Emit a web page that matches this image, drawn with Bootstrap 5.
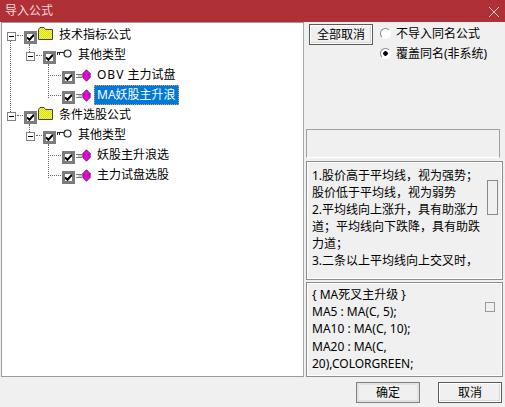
<!DOCTYPE html>
<html lang="zh-CN">
<head>
<meta charset="utf-8">
<title>导入公式</title>
<link rel="stylesheet" href="https://cdn.jsdelivr.net/npm/bootstrap@5.3.0/dist/css/bootstrap.min.css">
<style>
html,body{height:407px;overflow:hidden}
body{background:#f0f0f0;color:#000;font:12px/17px "Noto Sans","Noto Sans CJK SC",sans-serif}
.dlg{width:505px;height:407px}
.ttl{height:22px;background:#b03037;color:#f2dcdc;padding-left:5px;padding-bottom:1px;font-size:12px}
.ttl svg{margin-right:6px;margin-top:3px}
.main{height:355px;padding-left:1px}
.treebox{width:303px;border:1px solid #9a9a9a;border-right-color:#a8a8a8;background:#fff;margin:0;padding:2px 0 0}
.side{width:197px;margin-left:2px}
.tnode{height:20px;position:relative;list-style:none}
.lv1{padding-left:19px}
.lv2{padding-left:38px}
.exp{width:9px;height:9px;border:1px solid #808080;background:#fff;margin-left:5px;margin-right:8px;margin-top:2px;position:relative;flex:none}
.exp::after{content:"";position:absolute;left:1px;right:1px;top:3px;height:1px;background:#000}
.lv2 .chk{margin-left:22px}
input.chk{appearance:none;width:13px;height:13px;margin:5px 0 0;border:3px solid #7c7c7c;border-radius:0;background:#fff center/7px 7px no-repeat;flex:none}
input.chk:checked{background-image:url("data:image/svg+xml,%3Csvg xmlns='http://www.w3.org/2000/svg' viewBox='0 0 7 7'%3E%3Cpath d='M0 3.4 2.4 5.8 7 .8' fill='none' stroke='%23000' stroke-width='2'/%3E%3C/svg%3E")}
.ico{flex:none;margin-left:1px}
.lbl{margin-left:6px;white-space:nowrap;line-height:20px}
.lbl.sel{margin-left:3px;margin-top:-1px;height:20px;padding:0 2px;background:#0078d7;color:#fff;border:1px dotted #e8a040;line-height:18px}
.wide{letter-spacing:1px}
.vl,.hl{position:absolute;pointer-events:none}
.vl{border-left:1px dotted #666;width:0}
.hl{border-top:1px dotted #666;height:0}
.wbtn{background:#f0f0f0;border:1px solid #5a5a5a;box-shadow:inset 0 0 0 1px #fff,inset -1px -1px 0 1px #d8d8d8;border-radius:0;padding:0;font-size:12px;line-height:18px;color:#000;width:64px;height:21px}
.wbtn.pale{border-color:#808080;box-shadow:inset 0 0 0 2px #e2e2e2}
.topzone{height:107px;padding:2px 0 0 3px}
.rad{padding:0;margin:0 0 3px;display:flex;align-items:center;height:17px;min-height:0}
.rad .form-check-input{appearance:none;float:none;width:11px;height:11px;margin:0 5px 0 0;border:1px solid #8a8a8a;border-right-color:#fff;border-bottom-color:#fff;border-radius:50%;background:#fff none;box-shadow:none}
.rad .form-check-input:checked{background:radial-gradient(circle,#000 0 2px,#fff 2.5px)}
.rad .form-check-label{opacity:1;color:#000}
.rads{margin-left:7px;padding-top:1px}
.gbox{width:194px;height:29px;border:1px solid #a0a0a0;border-bottom-color:#fff;margin:0}
.memo{border:1px solid #8c8c8c;box-shadow:inset 0 0 0 1px #fff;padding:5px 18px 0 5px;position:relative;overflow:hidden;width:197px;line-height:17px}
.memoA{height:119px;margin-top:3px}
.memoB{height:95px;margin-top:2px;padding-top:3px;line-height:17.2px}
.thumb{position:absolute;left:180px;top:18px;width:11px;height:35px;border:1px solid #8a8a8a;background:#f0f0f0}
.sq{position:absolute;left:178px;top:19px;width:10px;height:10px;border:1px solid #9a9a9a}
.foot{height:30px;padding:5px 3px 0 0;gap:18px}
</style>
</head>
<body>
<div class="dlg d-flex flex-column">
  <div class="ttl d-flex align-items-center justify-content-between">
    <span>导入公式</span>
    <svg width="10" height="10" viewBox="0 0 10 10"><path d="M0 0 10 10M10 0 0 10" stroke="#eccccc" stroke-width="1" fill="none"/></svg>
  </div>
  <div class="main d-flex">
    <ul class="treebox">
      <li class="tnode d-flex align-items-center"><i class="vl" style="left:8px;top:15px;height:76px"></i><i class="hl" style="left:15px;top:10px;width:8px"></i><i class="vl" style="left:27px;top:19px;height:8px"></i>
        <span class="exp"></span><input class="chk" type="checkbox" checked>
        <svg class="ico" width="15" height="14" viewBox="0 0 15 14" style="margin-top:-4px"><defs><pattern id="d" width="2" height="2" patternUnits="userSpaceOnUse"><rect width="2" height="2" fill="#ffff00"/><rect width="1" height="1" fill="#d0d060"/><rect x="1" y="1" width="1" height="1" fill="#d0d060"/></pattern></defs><path d="M.5 3.5 2 1.5H6L7.500 3.500H14.500V13.500H.5Z" fill="url(#d)" stroke="#444"/></svg>
        <span class="lbl">技术指标公式</span></li>
      <li class="tnode lv1 d-flex align-items-center"><i class="hl" style="left:34px;top:10px;width:8px"></i><i class="vl" style="left:46px;top:19px;height:34px"></i>
        <span class="exp"></span><input class="chk" type="checkbox" checked>
        <svg class="ico" width="15" height="9" viewBox="0 0 15 9" style="margin-top:-3px"><circle cx="10.500" cy="4.500" r="3.500" fill="#fff" stroke="#222" stroke-width="1.200"/><path d="M.5 3V6M2.500 3V6M0 3.500H7" stroke="#222" fill="none"/></svg>
        <span class="lbl">其他类型</span></li>
      <li class="tnode lv2 d-flex align-items-center"><i class="hl" style="left:46px;top:10px;width:13px"></i>
        <input class="chk" type="checkbox" checked>
        <svg class="ico" width="15" height="13" viewBox="0 0 15 13"><rect x="0" y="5" width="6" height="1" fill="#777"/><rect x="0" y="8" width="6" height="1" fill="#777"/><rect x="2" y="6" width="4" height="2" fill="#ccc"/><path d="M10.500 .8 14.200 4.500V8.500L10.500 12.200 6.800 8.500V4.500Z" fill="#f000e0" stroke="#402040" stroke-width=".8"/><path d="M6.800 4.500 10.500 7.500 14.200 4.500" fill="none" stroke="#800080" stroke-width=".6"/></svg>
        <span class="lbl"><span class="wide">OBV</span> 主力试盘</span></li>
      <li class="tnode lv2 d-flex align-items-center"><i class="hl" style="left:46px;top:10px;width:13px"></i>
        <input class="chk" type="checkbox" checked>
        <svg class="ico" width="15" height="13" viewBox="0 0 15 13"><rect x="0" y="5" width="6" height="1" fill="#777"/><rect x="0" y="8" width="6" height="1" fill="#777"/><rect x="2" y="6" width="4" height="2" fill="#ccc"/><path d="M10.500 .8 14.200 4.500V8.500L10.500 12.200 6.800 8.500V4.500Z" fill="#f000e0" stroke="#402040" stroke-width=".8"/><path d="M6.800 4.500 10.500 7.500 14.200 4.500" fill="none" stroke="#800080" stroke-width=".6"/></svg>
        <span class="lbl sel">MA妖股主升浪</span></li>
      <li class="tnode d-flex align-items-center"><i class="hl" style="left:15px;top:10px;width:8px"></i><i class="vl" style="left:27px;top:19px;height:8px"></i>
        <span class="exp"></span><input class="chk" type="checkbox" checked>
        <svg class="ico" width="15" height="14" viewBox="0 0 15 14" style="margin-top:-4px"><path d="M.5 3.5 2 1.5H6L7.500 3.500H14.500V13.500H.5Z" fill="url(#d)" stroke="#444"/></svg>
        <span class="lbl">条件选股公式</span></li>
      <li class="tnode lv1 d-flex align-items-center"><i class="hl" style="left:34px;top:10px;width:8px"></i><i class="vl" style="left:46px;top:19px;height:34px"></i>
        <span class="exp"></span><input class="chk" type="checkbox" checked>
        <svg class="ico" width="15" height="9" viewBox="0 0 15 9" style="margin-top:-3px"><circle cx="10.500" cy="4.500" r="3.500" fill="#fff" stroke="#222" stroke-width="1.200"/><path d="M.5 3V6M2.500 3V6M0 3.500H7" stroke="#222" fill="none"/></svg>
        <span class="lbl">其他类型</span></li>
      <li class="tnode lv2 d-flex align-items-center"><i class="hl" style="left:46px;top:10px;width:13px"></i>
        <input class="chk" type="checkbox" checked>
        <svg class="ico" width="15" height="13" viewBox="0 0 15 13"><rect x="0" y="5" width="6" height="1" fill="#777"/><rect x="0" y="8" width="6" height="1" fill="#777"/><rect x="2" y="6" width="4" height="2" fill="#ccc"/><path d="M10.500 .8 14.200 4.500V8.500L10.500 12.200 6.800 8.500V4.500Z" fill="#f000e0" stroke="#402040" stroke-width=".8"/><path d="M6.800 4.500 10.500 7.500 14.200 4.500" fill="none" stroke="#800080" stroke-width=".6"/></svg>
        <span class="lbl">妖股主升浪选</span></li>
      <li class="tnode lv2 d-flex align-items-center"><i class="hl" style="left:46px;top:10px;width:13px"></i>
        <input class="chk" type="checkbox" checked>
        <svg class="ico" width="15" height="13" viewBox="0 0 15 13"><rect x="0" y="5" width="6" height="1" fill="#777"/><rect x="0" y="8" width="6" height="1" fill="#777"/><rect x="2" y="6" width="4" height="2" fill="#ccc"/><path d="M10.500 .8 14.200 4.500V8.500L10.500 12.200 6.800 8.500V4.500Z" fill="#f000e0" stroke="#402040" stroke-width=".8"/><path d="M6.800 4.500 10.500 7.500 14.200 4.500" fill="none" stroke="#800080" stroke-width=".6"/></svg>
        <span class="lbl">主力试盘选股</span></li>
    </ul>
    <div class="side d-flex flex-column">
      <div class="topzone d-flex">
        <button class="btn wbtn" type="button">全部取消</button>
        <div class="rads">
          <div class="form-check rad"><input class="form-check-input" type="radio" name="r" id="r1"><label class="form-check-label" for="r1">不导入同名公式</label></div>
          <div class="form-check rad"><input class="form-check-input" type="radio" name="r" id="r2" checked><label class="form-check-label" for="r2">覆盖同名(非系统)</label></div>
        </div>
      </div>
      <div class="gbox"></div>
      <div class="memo memoA">1.股价高于平均线，视为强势；<br>股价低于平均线，视为弱势<br>2.平均线向上涨升，具有助涨力道；平均线向下跌降，具有助跌力道；<br>3.二条以上平均线向上交叉时，<span class="thumb"></span></div>
      <div class="memo memoB">{ MA死叉主升级 }<br>MA5 : MA(C, 5);<br>MA10 : MA(C, 10);<br>MA20 : MA(C,<br>20),COLORGREEN;<span class="sq"></span></div>
    </div>
  </div>
  <div class="foot d-flex justify-content-end">
    <button class="btn wbtn pale" type="button">确定</button>
    <button class="btn wbtn" type="button">取消</button>
  </div>
</div>
</body>
</html>
